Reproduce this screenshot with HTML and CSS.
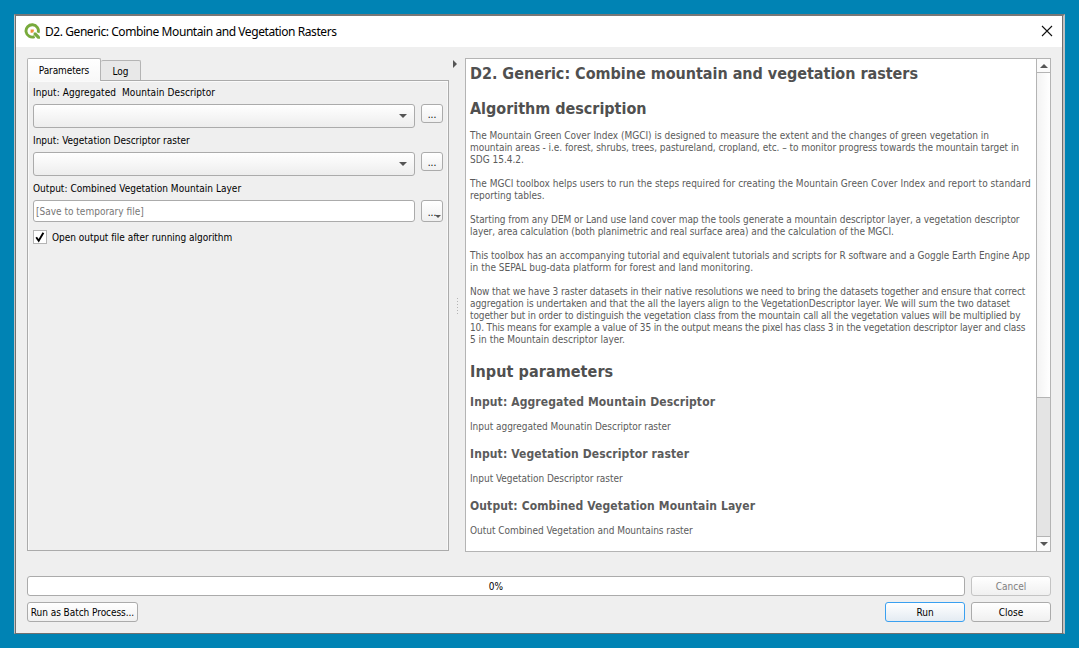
FILE: index.html
```html
<!DOCTYPE html>
<html lang="en">
<head>
<meta charset="utf-8">
<title>D2. Generic: Combine Mountain and Vegetation Rasters</title>
<link rel="stylesheet" href="styles.css">
</head>
<body>
<main class="backdrop">
<section class="dialog">
  <header class="titlebar">
    <svg class="logo" width="17" height="17" viewBox="0 0 17 17"><path d="M10.6 13.6A6.2 6.2 0 1 1 14.1 9.8" fill="none" stroke="#78aa3c" stroke-width="2.9"/><path d="M9.6 9.6H12L16 13.6V15.8H13.6L9.6 11.8Z" fill="#79aa42"/><path d="M6.6 6.6h3.2v2.2H8.8V9.8H6.6Z" fill="#ee913b"/></svg>
    <h1 class="title">D2. Generic: Combine Mountain and Vegetation Rasters</h1>
    <svg class="close-icon" width="12" height="12" viewBox="0 0 12 12"><path d="M1 1l10 10M11 1L1 11" stroke="#111" stroke-width="1.1"/></svg>
  </header>
  <div class="body">
    <div class="panes">
      <div class="left">
        <nav class="tabs"><span class="tab active">Parameters</span><span class="tab log">Log</span></nav>
        <div class="form">
          <label class="label wide">Input: Aggregated&nbsp; Mountain Descriptor</label>
          <div class="row"><div class="combo"><i class="down"></i></div><button class="dots">...</button></div>
          <label class="label">Input: Vegetation Descriptor raster</label>
          <div class="row"><div class="combo"><i class="down"></i></div><button class="dots">...</button></div>
          <label class="label output">Output: Combined Vegetation Mountain Layer</label>
          <div class="row"><div class="input"><span>[Save to temporary file]</span></div><button class="dots menu">...<i class="down small"></i></button></div>
          <div class="check"><span class="box"><svg width="12" height="12" viewBox="0 0 12 12"><path d="M2.2 6.2L4.7 9.8L9.4 1.8" fill="none" stroke="#000" stroke-width="1.9"/></svg></span><span class="check-text">Open output file after running algorithm</span></div>
        </div>
      </div>
      <div class="splitter"><i class="collapse"></i><i class="grip"></i></div>
      <article class="help">
        <div class="doc">
          <h2>D2. Generic: Combine mountain and vegetation rasters</h2>
          <h2 class="second">Algorithm description</h2>
          <p class="intro"><span class="slight">The Mountain Green Cover Index (MGCI) is designed to measure the extent and the changes of green vegetation in</span><br><span class="tight">mountain areas - i.e. forest, shrubs, trees, pastureland, cropland, etc. – to monitor progress towards the mountain target in</span><br>SDG 15.4.2.</p>
          <p><span class="loose">The MGCI toolbox helps users to run the steps required for creating the Mountain Green Cover Index and report to standard</span><br>reporting tables.</p>
          <p><span class="tight">Starting from any DEM or Land use land cover map the tools generate a mountain descriptor layer, a vegetation descriptor</span><br><span class="tighter">layer, area calculation (both planimetric and real surface area) and the calculation of the MGCI.</span></p>
          <p><span class="snug">This toolbox has an accompanying tutorial and equivalent tutorials and scripts for R software and a Goggle Earth Engine App</span><br><span class="loose">in the SEPAL bug-data platform for forest and land monitoring.</span></p>
          <p><span class="narrow">Now that we have 3 raster datasets in their native resolutions we need to bring the datasets together and ensure that correct</span><br><span class="tighter">aggregation is undertaken and that the all the layers align to the VegetationDescriptor layer. We will sum the two dataset</span><br><span class="narrower">together but in order to distinguish the vegetation class from the mountain call all the vegetation values will be multiplied by</span><br><span class="narrowest">10. This means for example a value of 35 in the output means the pixel has class 3 in the vegetation descriptor layer and class</span><br>5 in the Mountain descriptor layer.</p>
          <h2 class="third">Input parameters</h2>
          <h3>Input: Aggregated Mountain Descriptor</h3>
          <p class="desc">Input aggregated Mounatin Descriptor raster</p>
          <h3>Input: Vegetation Descriptor raster</h3>
          <p class="desc">Input Vegetation Descriptor raster</p>
          <h3>Output: Combined Vegetation Mountain Layer</h3>
          <p class="desc">Outut Combined Vegetation and Mountains raster</p>
        </div>
        <div class="scroll"><div class="arrow"><i class="up"></i></div><div class="thumb"></div><div class="track"></div><div class="arrow last"><i class="down"></i></div></div>
      </article>
    </div>
    <div class="actions"><div class="progress">0%</div><button class="btn disabled">Cancel</button></div>
    <div class="actions bottom"><button class="btn batch">Run as Batch Process...</button><span class="fill"></span><button class="btn run">Run</button><button class="btn">Close</button></div>
  </div>
</section>
</main>
</body>
</html>
```
FILE: styles.css
```css
* { box-sizing: border-box; }
body { margin: 0; font-family: "DejaVu Sans Condensed", "DejaVu Sans", sans-serif; font-stretch: condensed; font-size: 10px; color: #000; }
.backdrop { width: 1079px; height: 648px; background: #0083b4; padding: 14px; overflow: hidden; }
.dialog { width: 1051px; height: 620px; border: 1px solid #707070; border-top: 2px solid #777; border-right: 2px solid #c2c2c2; border-left: 1px solid #c2c2c2; box-shadow: inset 1px 0 #707070, inset -1px 0 #707070; padding: 0 1px; background: #efefef; }
.titlebar { height: 31px; background: #fff; display: flex; align-items: center; padding: 0 9px 0 8px; }
.logo { margin-top: -1px; }
.title { margin: 0 0 0 4px; flex: 1; font: 12px/16px "Noto Sans", sans-serif; letter-spacing: -.43px; white-space: nowrap; }
.close-icon { margin-top: -2px; }
.body { padding: 11px 11px 0 11px; }
.panes { display: flex; height: 494px; }
.left { width: 422px; height: 493px; display: flex; flex-direction: column; }
.tabs { display: flex; height: 22px; align-items: flex-end; flex: none; }
.tab { border: 1px solid #b4b4b4; border-bottom: 0; border-radius: 2px 2px 0 0; text-align: center; background: #e8e8e8; }
.tab.active { width: 74px; height: 23px; line-height: 24px; letter-spacing: -.1px; background: linear-gradient(#fff, #f8f8f8); margin-bottom: -1px; position: relative; }
.tab.log { width: 40px; height: 20px; line-height: 22px; border-left: 0; }
.form { flex: 1; border: 1px solid #ababab; padding: 5px 5px 0; box-shadow: inset 1px 1px #fafafa, inset -1px 0 #f8f8f8; }
.label { display: block; height: 14px; line-height: 14px; white-space: nowrap; }
.wide { letter-spacing: .08px; }
.output { letter-spacing: .03px; }
.row { display: flex; gap: 6px; height: 24px; margin: 4px 0 6px; }
.combo { width: 382px; height: 24px; border: 1px solid #ababab; border-radius: 3px; background: linear-gradient(#fff, #ededed); display: flex; align-items: center; justify-content: flex-end; padding-right: 7px; }
.down { width: 0; height: 0; border: 4px solid transparent; border-top-color: #555; border-bottom: 0; }
.up { width: 0; height: 0; border: 4px solid transparent; border-bottom-color: #555; border-top: 0; }
button { font: inherit; color: inherit; padding: 0; margin: 0; border: 1px solid #ababab; border-radius: 3px; background: linear-gradient(#fff, #f0f0f0); }
.dots { width: 22px; height: 19px; line-height: 19px; }
.menu { height: 22px; line-height: 23px; position: relative; }
.small { position: absolute; right: 1px; bottom: 3px; border-width: 3px 3px 0; }
.input { width: 382px; height: 22px; border: 1px solid #ababab; border-radius: 3px; background: #fff; color: #777; line-height: 21px; padding-left: 2px; }
.check { display: flex; align-items: center; height: 14px; margin-top: 6px; gap: 5px; }
.check-text { letter-spacing: -.02px; }
.box { width: 14px; height: 14px; border: 1px solid #b4b4b4; background: #fff; display: flex; }
.splitter { width: 16px; padding: 2px 0 0 4px; }
.collapse { display: block; width: 0; height: 0; border: 4px solid transparent; border-left-color: #555; border-right: 0; }
.grip { display: block; width: 1px; height: 16px; margin: 230px 0 0 4px; background: repeating-linear-gradient(#b4b4b4 0 1px, transparent 1px 3px); }
.help { width: 586px; height: 494px; margin-left: auto; border: 1px solid #b4b4b4; background: #fff; display: flex; color: #5b5b5b; }
.doc { width: 571px; padding: 5px 0 0 4px; overflow: hidden; white-space: nowrap; }
h2 { margin: 0; font-size: 16px; line-height: 20px; letter-spacing: -.02px; color: #505050; }
.second { margin-top: 15px; }
.third { margin-top: 16px; letter-spacing: .08px; }
h3 { margin: 12px 0 0; font-size: 12px; line-height: 16px; letter-spacing: .12px; color: #5b5b5b; }
p { margin: 12px 0 0; font-size: 10px; line-height: 12px; }
.intro { margin-top: 11px; }
.desc { margin-top: 11px; margin-bottom: 13px; letter-spacing: -.03px; }
.loose { letter-spacing: .026px; }
.slight { letter-spacing: -.01px; }
.snug { letter-spacing: -.032px; }
.tight { letter-spacing: -.05px; }
.tighter { letter-spacing: -.068px; }
.narrow { letter-spacing: -.1px; }
.narrower { letter-spacing: -.118px; }
.narrowest { letter-spacing: -.15px; }
.scroll { width: 14px; border-left: 1px solid #b4b4b4; display: flex; flex-direction: column; }
.arrow { height: 14px; border-bottom: 1px solid #b4b4b4; display: flex; align-items: center; justify-content: center; background: #fafafa; }
.last { border-bottom: 0; }
.thumb { height: 325px; border-bottom: 1px solid #b4b4b4; background: linear-gradient(90deg, #f3f3f3, #fff); }
.track { flex: 1; background: #e4e4e4; border-bottom: 1px solid #b4b4b4; }
.actions { display: flex; gap: 6px; margin-top: 24px; height: 20px; }
.bottom { margin-top: 6px; }
.progress { flex: 1; background: #fff; border: 1px solid #ababab; border-radius: 3px; text-align: center; line-height: 20px; }
.btn { width: 80px; height: 20px; line-height: 19px; white-space: nowrap; }
.disabled { color: #808080; border-color: #c4c4c4; }
.run { border-color: #3aa0f0; background: linear-gradient(#fff, #e4ebf2); }
.batch { width: 111px; letter-spacing: -.05px; }
.fill { flex: 1; }
```
